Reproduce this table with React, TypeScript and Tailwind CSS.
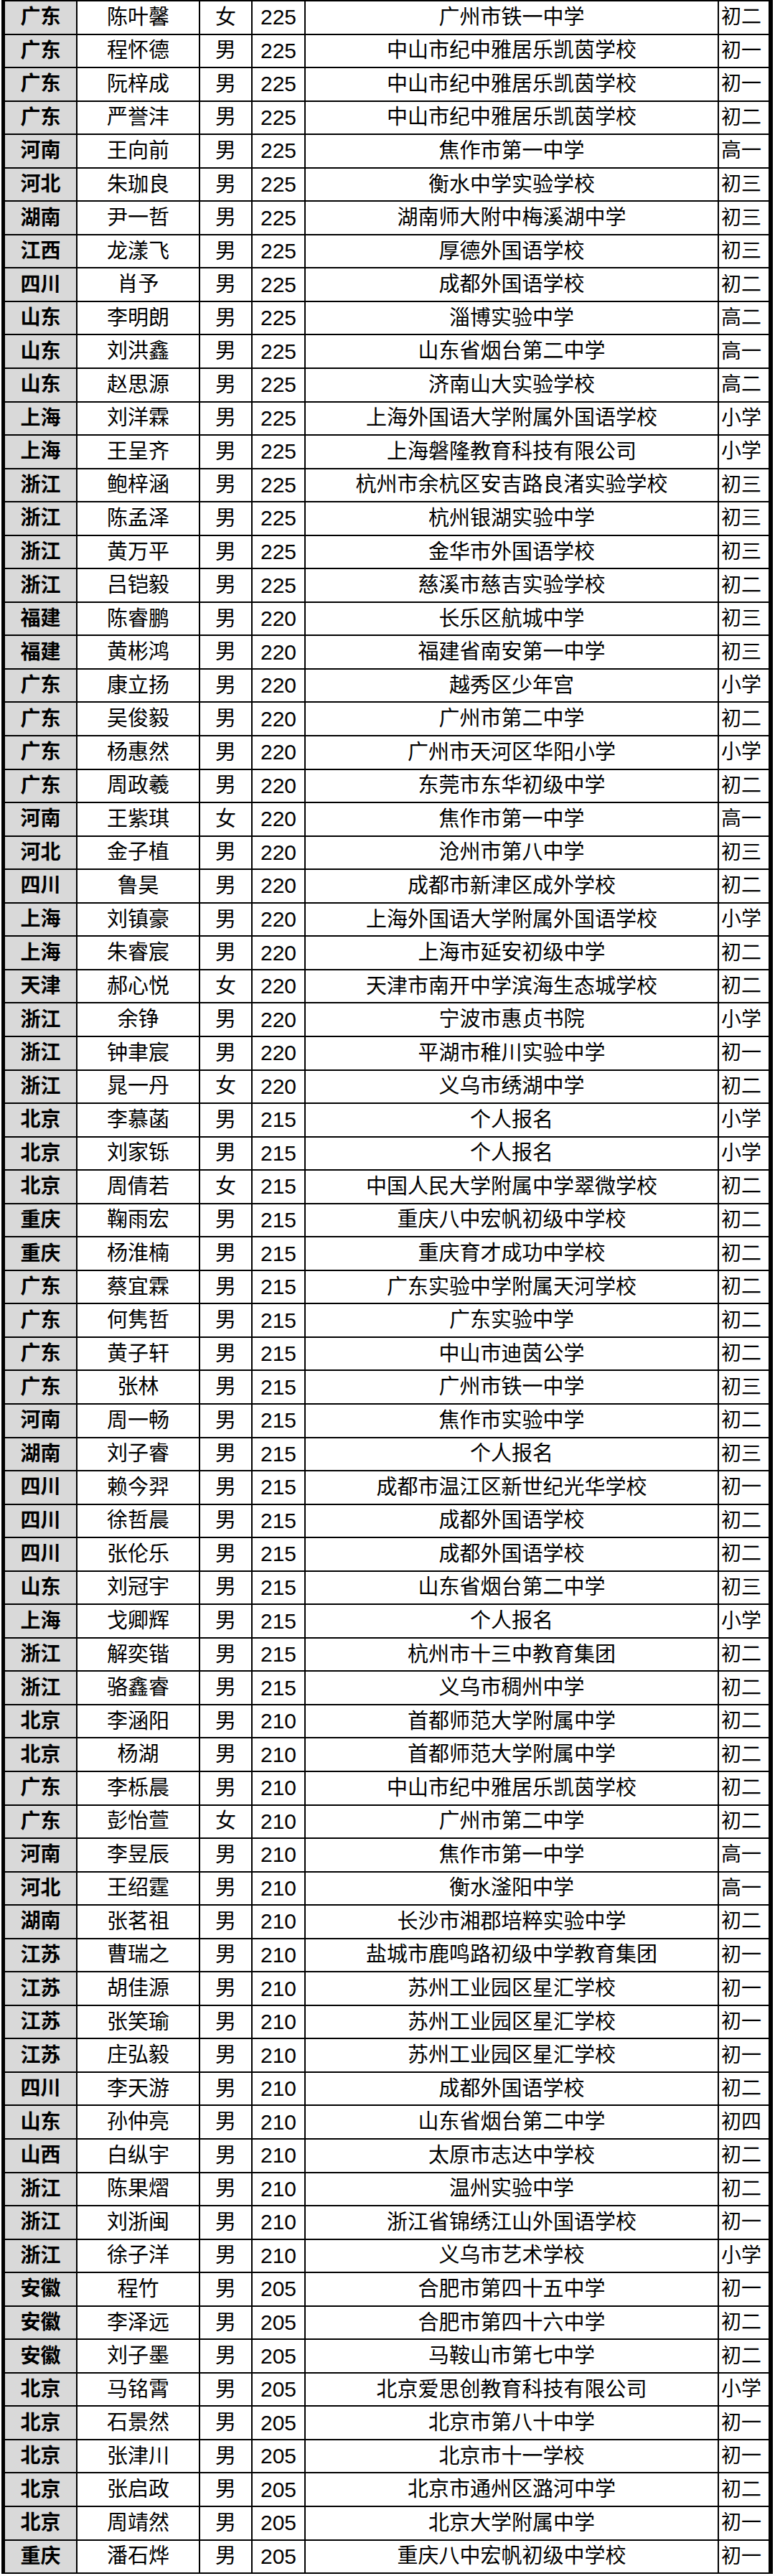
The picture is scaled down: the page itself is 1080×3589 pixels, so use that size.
import React from "react";

const raw = `广东 陈叶馨 女 225 广州市铁一中学 初二
广东 程怀德 男 225 中山市纪中雅居乐凯茵学校 初一
广东 阮梓成 男 225 中山市纪中雅居乐凯茵学校 初一
广东 严誉沣 男 225 中山市纪中雅居乐凯茵学校 初二
河南 王向前 男 225 焦作市第一中学 高一
河北 朱珈良 男 225 衡水中学实验学校 初三
湖南 尹一哲 男 225 湖南师大附中梅溪湖中学 初三
江西 龙漾飞 男 225 厚德外国语学校 初三
四川 肖予 男 225 成都外国语学校 初二
山东 李明朗 男 225 淄博实验中学 高二
山东 刘洪鑫 男 225 山东省烟台第二中学 高一
山东 赵思源 男 225 济南山大实验学校 高二
上海 刘洋霖 男 225 上海外国语大学附属外国语学校 小学
上海 王呈齐 男 225 上海磐隆教育科技有限公司 小学
浙江 鲍梓涵 男 225 杭州市余杭区安吉路良渚实验学校 初三
浙江 陈孟泽 男 225 杭州银湖实验中学 初三
浙江 黄万平 男 225 金华市外国语学校 初三
浙江 吕铠毅 男 225 慈溪市慈吉实验学校 初二
福建 陈睿鹏 男 220 长乐区航城中学 初三
福建 黄彬鸿 男 220 福建省南安第一中学 初三
广东 康立扬 男 220 越秀区少年宫 小学
广东 吴俊毅 男 220 广州市第二中学 初二
广东 杨惠然 男 220 广州市天河区华阳小学 小学
广东 周政羲 男 220 东莞市东华初级中学 初二
河南 王紫琪 女 220 焦作市第一中学 高一
河北 金子植 男 220 沧州市第八中学 初三
四川 鲁昊 男 220 成都市新津区成外学校 初二
上海 刘镇豪 男 220 上海外国语大学附属外国语学校 小学
上海 朱睿宸 男 220 上海市延安初级中学 初二
天津 郝心悦 女 220 天津市南开中学滨海生态城学校 初二
浙江 余铮 男 220 宁波市惠贞书院 小学
浙江 钟聿宸 男 220 平湖市稚川实验中学 初一
浙江 晁一丹 女 220 义乌市绣湖中学 初二
北京 李慕菡 男 215 个人报名 小学
北京 刘家铄 男 215 个人报名 小学
北京 周倩若 女 215 中国人民大学附属中学翠微学校 初二
重庆 鞠雨宏 男 215 重庆八中宏帆初级中学校 初二
重庆 杨淮楠 男 215 重庆育才成功中学校 初二
广东 蔡宜霖 男 215 广东实验中学附属天河学校 初二
广东 何隽哲 男 215 广东实验中学 初二
广东 黄子轩 男 215 中山市迪茵公学 初二
广东 张林 男 215 广州市铁一中学 初三
河南 周一畅 男 215 焦作市实验中学 初二
湖南 刘子睿 男 215 个人报名 初三
四川 赖今羿 男 215 成都市温江区新世纪光华学校 初一
四川 徐哲晨 男 215 成都外国语学校 初二
四川 张伦乐 男 215 成都外国语学校 初二
山东 刘冠宇 男 215 山东省烟台第二中学 初三
上海 戈卿辉 男 215 个人报名 小学
浙江 解奕锴 男 215 杭州市十三中教育集团 初二
浙江 骆鑫睿 男 215 义乌市稠州中学 初二
北京 李涵阳 男 210 首都师范大学附属中学 初二
北京 杨湖 男 210 首都师范大学附属中学 初二
广东 李栎晨 男 210 中山市纪中雅居乐凯茵学校 初二
广东 彭怡萱 女 210 广州市第二中学 初二
河南 李昱辰 男 210 焦作市第一中学 高一
河北 王绍霆 男 210 衡水滏阳中学 高一
湖南 张茗祖 男 210 长沙市湘郡培粹实验中学 初二
江苏 曹瑞之 男 210 盐城市鹿鸣路初级中学教育集团 初一
江苏 胡佳源 男 210 苏州工业园区星汇学校 初一
江苏 张笑瑜 男 210 苏州工业园区星汇学校 初一
江苏 庄弘毅 男 210 苏州工业园区星汇学校 初一
四川 李天游 男 210 成都外国语学校 初二
山东 孙仲亮 男 210 山东省烟台第二中学 初四
山西 白纵宇 男 210 太原市志达中学校 初二
浙江 陈果熠 男 210 温州实验中学 初二
浙江 刘浙闽 男 210 浙江省锦绣江山外国语学校 初一
浙江 徐子洋 男 210 义乌市艺术学校 小学
安徽 程竹 男 205 合肥市第四十五中学 初一
安徽 李泽远 男 205 合肥市第四十六中学 初二
安徽 刘子墨 男 205 马鞍山市第七中学 初二
北京 马铭霄 男 205 北京爱思创教育科技有限公司 小学
北京 石景然 男 205 北京市第八十中学 初一
北京 张津川 男 205 北京市十一学校 初一
北京 张启政 男 205 北京市通州区潞河中学 初二
北京 周靖然 男 205 北京大学附属中学 初一
重庆 潘石烨 男 205 重庆八中宏帆初级中学校 初一`;

const rows = raw.split("\n").map((l) => l.trim().split(/\s+/));

export default function App() {
  return (
    <div
      className="w-[1080px] h-[3589px] bg-white text-black"
      style={{ fontFamily: '"Liberation Sans", "Noto Sans CJK SC", sans-serif' }}
    >
      <div className="ml-[2px] w-[1075px] grid grid-cols-[99px_169px_71px_72px_574px_69px] auto-rows-[44.55px] gap-[2px] bg-black border-l-[5px] border-r-[6px] border-t-2 border-b-2 border-black">
        {rows.map((r, i) => (
          <React.Fragment key={i}>
            <div className="bg-[#d9d9d9] flex items-center justify-center text-[28px] font-semibold leading-none">
              {r[0]}
            </div>
            <div className="bg-white flex items-center justify-center text-[29px] leading-none">
              {r[1]}
            </div>
            <div className="bg-white flex items-center justify-center text-[29px] leading-none">
              {r[2]}
            </div>
            <div className="bg-white flex items-center justify-center text-[30px] leading-none">
              {r[3]}
            </div>
            <div className="bg-white flex items-center justify-center text-[29px] leading-none whitespace-nowrap">
              {r[4]}
            </div>
            <div className="bg-white flex items-center justify-start pl-[3px] text-[28px] leading-none whitespace-nowrap">
              {r[5]}
            </div>
          </React.Fragment>
        ))}
      </div>
    </div>
  );
}
